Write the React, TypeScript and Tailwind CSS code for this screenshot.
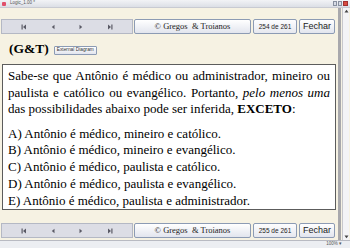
import React from "react";

const serif = { fontFamily: '"Liberation Serif", "Times New Roman", serif' };
const sans = { fontFamily: '"Liberation Sans", Arial, sans-serif' };

function NavIcon({ kind }: { kind: "first" | "prev" | "next" | "last" }) {
  return (
    <svg width="6" height="6" viewBox="0 0 6 6">
      {kind === "first" && (
        <>
          <rect x="0.5" y="0.5" width="1.2" height="5" fill="#5a5a66" />
          <polygon points="5,0.5 2,3 5,5.5" fill="#5a5a66" />
        </>
      )}
      {kind === "prev" && <polygon points="4.5,0.8 1.8,3 4.5,5.2" fill="#5a5a66" />}
      {kind === "next" && <polygon points="1.5,0.8 4.2,3 1.5,5.2" fill="#5a5a66" />}
      {kind === "last" && (
        <>
          <polygon points="1,0.5 4,3 1,5.5" fill="#5a5a66" />
          <rect x="4.3" y="0.5" width="1.2" height="5" fill="#5a5a66" />
        </>
      )}
    </svg>
  );
}

function Toolbar({ page }: { page: string }) {
  return (
    <div className="flex h-[15px] items-stretch">
      <div className="ml-[1px] flex w-[132px] items-center justify-around border border-[#b4b8c4] bg-[#dcdde5] px-[8px]">
        <NavIcon kind="first" />
        <NavIcon kind="prev" />
        <NavIcon kind="next" />
        <NavIcon kind="last" />
      </div>
      <div
        className="ml-[1px] flex w-[117px] items-center justify-center rounded-[2px] border border-[#8c9bb4] bg-gradient-to-b from-white to-[#e2e5ee] text-[8.5px] text-[#222]"
        style={serif}
      >
        © Gregos&nbsp; &amp; Troianos
      </div>
      <div
        className="ml-[2px] flex w-[44px] items-center justify-center rounded-[2px] border border-[#8c9bb4] bg-gradient-to-b from-[#fdfdfe] to-[#e6e8ef] text-[6.5px] text-[#222]"
        style={sans}
      >
        {page}
      </div>
      <div
        className="ml-[2px] flex w-[36px] items-center justify-center rounded-[2px] border border-[#8c9bb4] bg-gradient-to-b from-white to-[#e2e5ee] text-[9px] text-[#222]"
        style={sans}
      >
        Fechar
      </div>
    </div>
  );
}

export default function App() {
  return (
    <div className="flex h-[248px] w-[350px] flex-col overflow-hidden bg-[#f6f2e3]">
      {/* title bar */}
      <div className="flex h-[8px] items-center border-b border-[#c8cad2] bg-gradient-to-b from-[#f2f3f6] to-[#dcdfe6]">
        <div className="ml-[2px] h-[4px] w-[4px] rounded-[1px] bg-[#e0506a]" />
        <span className="ml-[4px] text-[4.5px] leading-none text-[#555]" style={sans}>
          Logic_1.00 *
        </span>
        <div className="ml-auto mr-[2px] flex gap-[1px]">
          <div className="h-[5px] w-[4px] border border-[#8890a0] bg-[#d8dce6]" />
          <div className="h-[5px] w-[4px] border border-[#8890a0] bg-[#d8dce6]" />
          <div className="h-[5px] w-[5px] border border-[#a03030] bg-[#d84a40]" />
        </div>
      </div>

      {/* middle */}
      <div className="flex flex-1">
        <div className="flex w-[337px] flex-col">
          <div className="mt-[11px]">
            <Toolbar page="254 de 261" />
          </div>
          <div className="flex h-[30px] items-center pl-[9px]">
            <span className="text-[13.5px] font-bold leading-none text-black" style={serif}>
              (G&amp;T)
            </span>
            <span
              className="ml-[5px] mt-[3px] rounded-[1px] border border-[#8c9bb4] bg-gradient-to-b from-white to-[#e2e5ee] px-[2px] py-[1px] text-[4.8px] leading-none text-[#333]"
              style={sans}
            >
              External Diagram
            </span>
          </div>
          <div
            className="ml-[2px] h-[146px] w-[334px] border border-[#5c5c5c] bg-white px-[5px] pt-[3px] text-[13px] text-black"
            style={serif}
          >
            <p className="text-justify leading-[16.5px]">
              Sabe-se que Antônio é médico ou administrador, mineiro ou paulista e católico ou evangélico.
              Portanto, <i>pelo menos uma</i> das possibilidades abaixo pode ser inferida, <b>EXCETO</b>:
            </p>
            <div className="mt-[8px] leading-[16.8px]">
              <div>A) Antônio é médico, mineiro e católico.</div>
              <div>B) Antônio é médico, mineiro e evangélico.</div>
              <div>C) Antônio é médico, paulista e católico.</div>
              <div>D) Antônio é médico, paulista e evangélico.</div>
              <div>E) Antônio é médico, paulista e administrador.</div>
            </div>
          </div>
          <div className="mt-[13px]">
            <Toolbar page="255 de 261" />
          </div>
        </div>
        {/* thick gray bar */}
        <div className="ml-[1px] w-[3px] bg-[#a8a8ac]" />
        {/* scrollbar */}
        <div className="ml-[1px] flex w-[7px] flex-col items-center justify-between border-l border-[#c8c8cc] bg-[#f4f4f6] py-[1px]">
          <svg width="5" height="4" viewBox="0 0 5 4">
            <polygon points="0.5,3.5 2.5,0.8 4.5,3.5" fill="#444" />
          </svg>
          <svg width="5" height="4" viewBox="0 0 5 4">
            <polygon points="0.5,0.5 2.5,3.2 4.5,0.5" fill="#444" />
          </svg>
        </div>
      </div>

      {/* status bar */}
      <div className="flex h-[8px] items-center justify-end border-t border-[#b8bac2] bg-[#eceef2] pr-[8px]">
        <span className="text-[4.5px] leading-none text-[#555]" style={sans}>
          100% ▾
        </span>
      </div>
    </div>
  );
}
